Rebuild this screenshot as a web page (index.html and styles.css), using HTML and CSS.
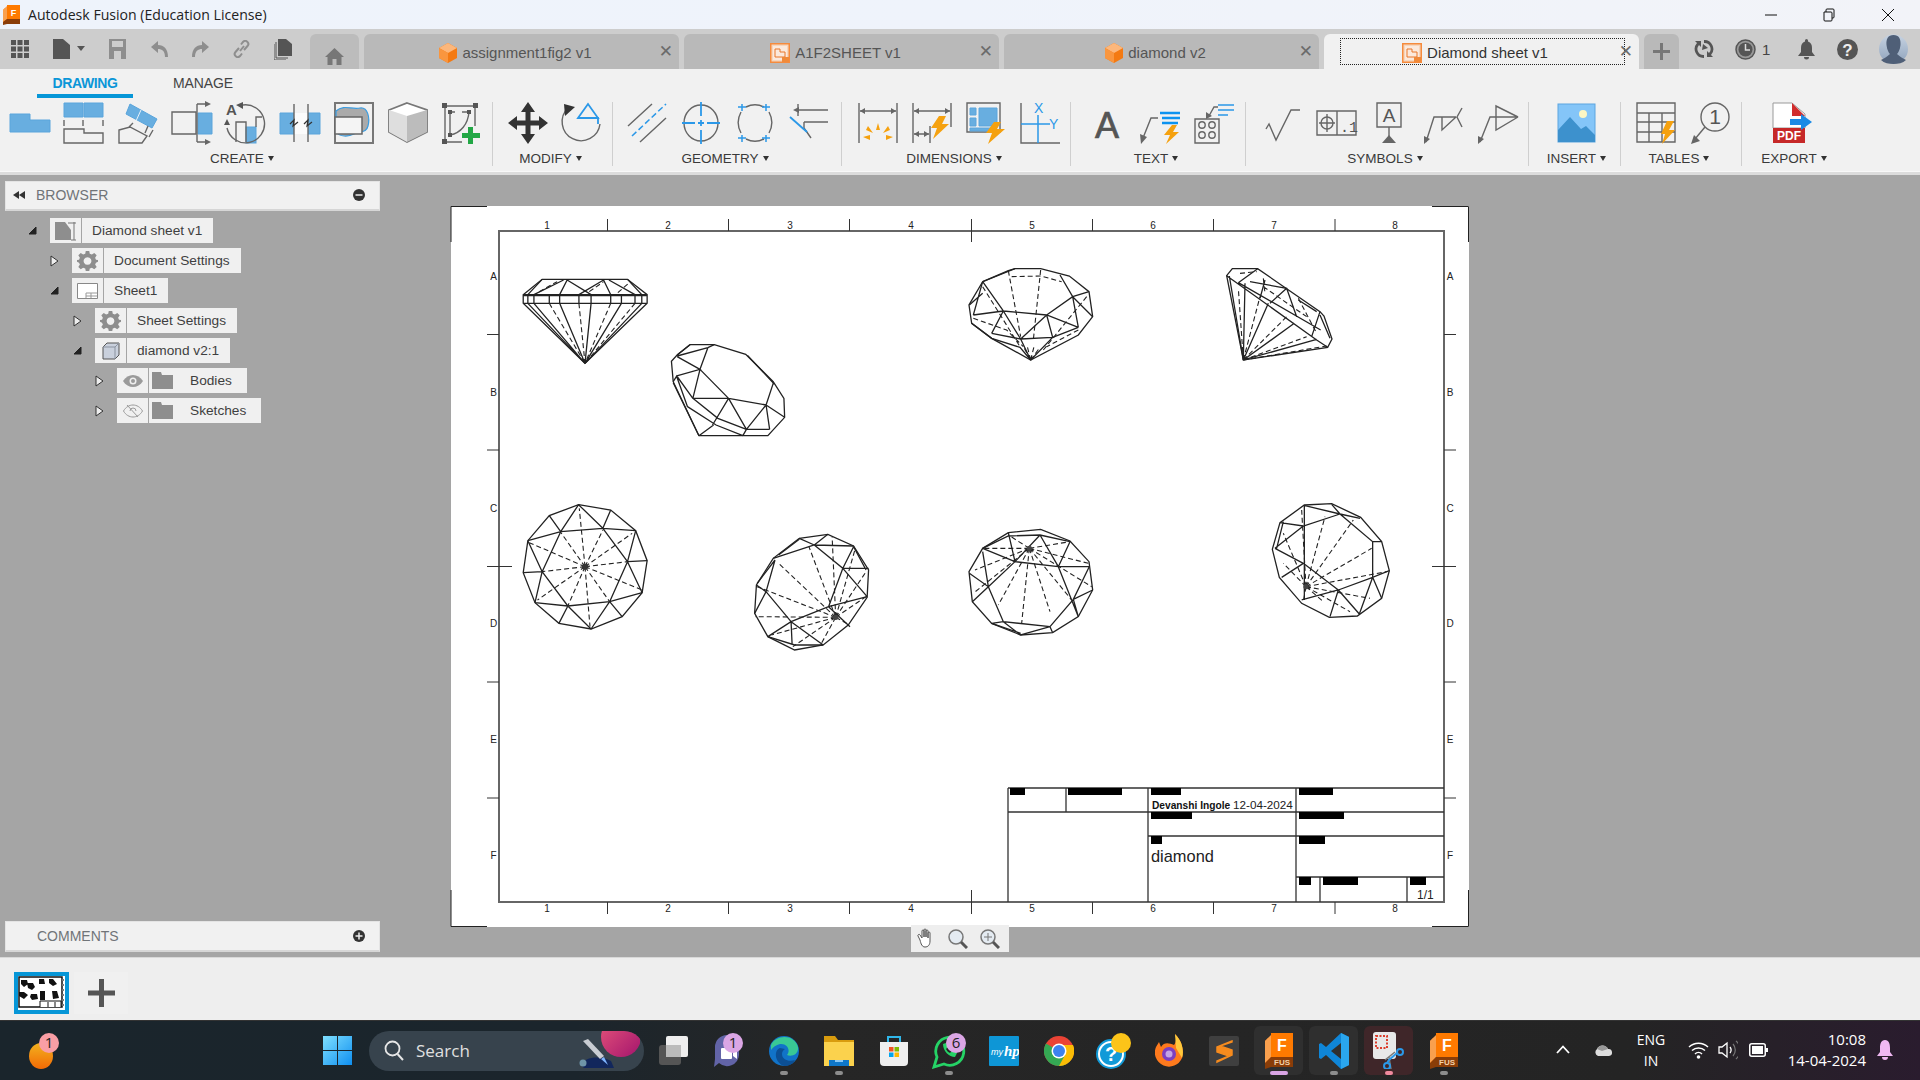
FILE: index.html
```html
<!DOCTYPE html>
<html lang="en">
<head>
<meta charset="utf-8">
<title>Autodesk Fusion</title>
<link rel="stylesheet" href="styles.css">
</head>
<body>
<svg class="defs" width="0" height="0">
  <symbol id="fus" viewBox="0 0 28 36">
    <path d="M3 5 L22 0 H28 V30 H6 L0 32 V8 Z" fill="#f47a12"/>
    <path d="M6 0 H28 V24 H6 Z" fill="#ff7a00"/>
    <path d="M0 8 L6 2 V24 L0 30 Z" fill="#f9a04e"/>
    <path d="M6 24 H28 V34 H6 L0 36 V30 Z" fill="#8a3d08"/>
  </symbol>
  <symbol id="sheetdoc" viewBox="0 0 20 20">
    <rect x=".75" y=".75" width="18.5" height="18.5" fill="#f6d6bd" stroke="#f58b3d" stroke-width="1.5"/>
    <rect x="3" y="3" width="14" height="14" fill="#fbe9dc"/>
    <path d="M5 6 H10 V9 H15 V14 H5 Z" fill="none" stroke="#e8772a"/>
    <rect x="12" y="14" width="7" height="5" fill="#f08a3a"/>
  </symbol>
  <symbol id="cube" viewBox="0 0 18 20">
    <path d="M9 0 L18 5 V15 L9 20 L0 15 V5 Z" fill="#f47a12"/>
    <path d="M9 0 L18 5 L9 10 L0 5 Z" fill="#fcb77c"/>
    <path d="M0 5 L9 10 V20 L0 15 Z" fill="#f9963f"/>
  </symbol>
  <symbol id="gear" viewBox="0 0 24 24">
    <path d="M10 1 H14 L14.6 4.2 L17 5.2 L19.7 3.3 L22.5 6 L20.7 8.8 L21.7 11 L24 11.5 V13.5 L21.7 14.5 L20.7 16.5 L22.5 19.3 L19.7 22 L17 20.2 L14.6 21 L14 24 H10 L9.4 21 L7 20.2 L4.3 22 L1.5 19.3 L3.3 16.5 L2.3 14.5 L0 13.5 V11.5 L2.3 11 L3.3 8.8 L1.5 6 L4.3 3.3 L7 5.2 L9.4 4.2 Z M12 8.2 A4.4 4.4 0 1 0 12.01 8.2 Z" fill="#8e8e8e" fill-rule="evenodd"/>
  </symbol>
  <symbol id="folder" viewBox="0 0 21 17">
    <path d="M0 0 H9 L10 3 H21 V17 H0 Z" fill="#8e8e8e"/>
  </symbol>
</svg>

<header class="titlebar">
  <svg class="app-logo" width="17" height="20" viewBox="0 0 17 20">
    <path d="M2 3 L14 0 H17 V17 H4 L0 18 V5 Z" fill="#f47a12"/>
    <path d="M4 0 H17 V14 H4 Z" fill="#ff7a00"/>
    <path d="M0 5 L4 1 V14 L0 17 Z" fill="#f9a04e"/>
    <path d="M4 14 H17 V19 H4 L0 20 V17 Z" fill="#8a3d08"/>
    <text x="10.500" y="10.500" class="logo-f">F</text>
  </svg>
  <span class="app-name">Autodesk Fusion (Education License)</span>
  <div class="winctl">
    <svg width="14" height="14" viewBox="0 0 14 14"><path d="M2 7 H14" class="wl"/></svg>
    <svg width="14" height="14" viewBox="0 0 14 14"><path d="M2 4 H9 A1 1 0 0 1 10 5 V12 A1 1 0 0 1 9 13 H3 A1 1 0 0 1 2 12 Z M4 4 V2 A1 1 0 0 1 5 1 H11 A1 1 0 0 1 12 2 V9 A1 1 0 0 1 11 10 H10" class="wl"/></svg>
    <svg width="14" height="14" viewBox="0 0 14 14"><path d="M1 1 L13 13 M13 1 L1 13" class="wl"/></svg>
  </div>
</header>

<nav class="toolbar">
  <div class="qat">
    <svg class="q-grid" width="18" height="18" viewBox="0 0 18 18"><path d="M0 0h5v5H0zM6.500 0h5v5h-5zM13 0h5v5h-5zM0 6.500h5v5H0zM6.500 6.500h5v5h-5zM13 6.500h5v5h-5zM0 13h5v5H0zM6.500 13h5v5h-5zM13 13h5v5h-5z" fill="#555"/></svg>
    <svg class="q-doc" width="32" height="20" viewBox="0 0 32 20"><path d="M0 0 H10 L17 6 V20 H0 Z" fill="#555"/><path d="M24 7 H32 L28 12 Z" fill="#555"/></svg>
    <svg class="q-save" width="17" height="20" viewBox="0 0 17 20"><path d="M0 0 H17 V20 H0 Z M3 2 V8 H14 V2 Z M5 12 V20 H12 V12 Z" fill="#8e8e8e" fill-rule="evenodd"/></svg>
    <svg class="q-undo" width="17" height="16" viewBox="0 0 17 16"><path d="M7 0 L0 6 L7 12 V8 C11 8 14 10 14 16 H17 C17 8 13 4 7 4 Z" fill="#8e8e8e"/></svg>
    <svg class="q-redo" width="17" height="16" viewBox="0 0 17 16"><path d="M10 0 L17 6 L10 12 V8 C6 8 3 10 3 16 H0 C0 8 4 4 10 4 Z" fill="#8e8e8e"/></svg>
    <svg class="q-link" width="17" height="18" viewBox="0 0 17 18"><path d="M7 11 L11 6 M6 8 L2.500 12 A3 3 0 0 0 7 16 L9 13.500 M11 10 L14.500 6 A3 3 0 0 0 10 2 L8 4.500" fill="none" stroke="#8e8e8e" stroke-width="2"/></svg>
    <svg class="q-copy" width="18" height="21" viewBox="0 0 18 21"><path d="M4 0 H12 L18 5 V17 H4 Z" fill="#555"/><path d="M2 3 V19 H14 M0 5 V21 H12" fill="none" stroke="#555"/></svg>
  </div>
  <div class="tab home"><svg width="19" height="17" viewBox="0 0 19 17"><path d="M9.500 0 L19 9 H16.500 V17 H11.500 V11 H7.500 V17 H2.500 V9 H0 Z" fill="#777"/></svg></div>
  <div class="tab"><span class="tab-in"><svg width="18" height="20"><use href="#cube"/></svg>assignment1fig2 v1</span><span class="x">✕</span></div>
  <div class="tab"><span class="tab-in"><svg width="20" height="20"><use href="#sheetdoc"/></svg>A1F2SHEET v1</span><span class="x">✕</span></div>
  <div class="tab"><span class="tab-in"><svg width="18" height="20"><use href="#cube"/></svg>diamond v2</span><span class="x">✕</span></div>
  <div class="tab active"><span class="focus"><span class="tab-in"><svg width="20" height="20"><use href="#sheetdoc"/></svg>Diamond sheet v1</span></span><span class="x">✕</span></div>
  <div class="tab plus"><svg width="17" height="17" viewBox="0 0 17 17"><path d="M7 0h3v7h7v3h-7v7H7v-7H0V7h7z" fill="#777"/></svg></div>
  <div class="tools">
    <svg class="t-upd" width="20" height="20" viewBox="0 0 20 20"><path d="M10 1 A9 9 0 0 1 17 16 L19 18 H13 V12 L15 14 A6 6 0 0 0 10 4 Z M10 19 A9 9 0 0 1 3 4 L1 2 H7 V8 L5 6 A6 6 0 0 0 10 16 Z" fill="#555"/><path d="M9 5 L14 9 L8 11 Z" fill="#555"/></svg>
    <svg class="t-clock" width="21" height="21" viewBox="0 0 21 21"><circle cx="10.500" cy="10.500" r="9.500" fill="#999" stroke="#555" stroke-width="1.500"/><circle cx="10.500" cy="10.500" r="7" fill="#555"/><path d="M10.500 5 V11 H15" stroke="#ddd" stroke-width="1.500" fill="none"/></svg>
    <span class="t-num">1</span>
    <svg class="t-bell" width="17" height="21" viewBox="0 0 17 21"><path d="M8.500 0 A2 2 0 0 1 10 2.500 C13 3.500 14 6 14 9 V13 L17 17 H0 L3 13 V9 C3 6 4 3.500 7 2.500 A2 2 0 0 1 8.500 0 Z M6 18 H11 A2.500 2.500 0 0 1 6 18 Z" fill="#555"/></svg>
    <svg class="t-help" width="21" height="21" viewBox="0 0 21 21"><circle cx="10.500" cy="10.500" r="10.500" fill="#555"/><text x="10.500" y="16.500" class="t-q">?</text></svg>
    <svg class="t-av" width="29" height="30" viewBox="0 0 29 30"><defs><linearGradient id="avg" x1="0" y1="0" x2="0" y2="1"><stop offset="0" stop-color="#c7d3e2"/><stop offset="1" stop-color="#8fa3bc"/></linearGradient></defs><circle cx="14.500" cy="15" r="14.500" fill="url(#avg)"/><path d="M14.500 1 C20 1 22 5 21.500 11 C21 16 19 19 18 20 C21 23 25 25 27 26 C24 29 19 30 14.500 30 C10 30 5 29 2 26 C4 25 8 23 11 20 C10 19 8 16 7.500 11 C7 5 9 1 14.500 1 Z" fill="#4f5f77"/></svg>
  </div>
</nav>

<section class="ribbon">
  <div class="rtabs">
    <span class="rtab on">DRAWING</span>
    <span class="rtab">MANAGE</span>
  </div>
  <div class="rgroups">
    <div class="rgroup g-create">
      <div class="ricons p10">
        <svg class="ic" viewBox="0 0 40 42"><path d="M0 12 H20 V18 H40 V30 H0 Z" class="bf"/></svg>
        <svg class="ic" viewBox="0 0 40 42"><path d="M0 1 H19 V15 H0 Z M20 1 H39 V15 H20 Z" class="bf"/><path d="M0 18 V24 M19 18 V24 M39 18 V24 M0 27 H20 V31 H39 V41 H0 Z" class="gr"/></svg>
        <svg class="ic" viewBox="0 0 40 42"><path d="M12 2 L39 17 L34 26 L8 12 Z" class="bf"/><path d="M23 8 L18 19" class="wh"/><path d="M1 28 L12 25 L29 34 L24 41 H1 Z M15 21 L11 25 M30 24 L27 31 M35 28 L31 35" class="gr"/></svg>
        <svg class="ic" viewBox="0 0 40 42"><path d="M0 10 H24 V32 H0 Z" class="gr"/><path d="M26 11 H40 V32 H26 Z" class="bf"/><path d="M25 2 V40 M25 2 H34 M25 40 H34" class="gr"/><path d="M33 -1 L39 2 L33 5 Z M33 37 L39 40 L33 43 Z" fill="#666"/></svg>
        <svg class="ic" viewBox="0 0 40 42"><text x="0" y="13" class="i-a">A</text><rect x="20" y="25" width="10" height="16" class="bf"/><path d="M17 3 A19 19 0 1 1 1 26" class="gr"/><path d="M17 0 V7 L10 3 Z M1 17 L-2 23 H4 Z" fill="#555"/><path d="M10 40 V20 H20 V40 M30 25 V15 H36" class="gr"/></svg>
        <svg class="ic" viewBox="0 0 40 42"><path d="M0 11 H14 V32 H0 Z M28 11 H40 V32 H28 Z" class="bf"/><rect x="14" y="11" width="14" height="21" fill="#fbfbfb"/><path d="M14 2 V40 M28 2 V40" class="gr"/><path d="M10 22 L14 18 L13 24 L18 20 M24 22 L28 18 L27 24 L32 20" fill="none" stroke="#333" stroke-width="1.200"/></svg>
        <svg class="ic" viewBox="0 0 40 42"><rect x="1" y="1" width="38" height="40" fill="none" stroke="#777" stroke-width="2"/><path d="M2 9 C10 2 18 8 26 6 C34 5 36 16 34 24 C32 32 26 28 20 32 C14 35 6 35 2 30 Z" fill="#aaa" stroke="#3a9ce0" stroke-width="1.200"/><rect x="1" y="15" width="27" height="17" fill="#f4f4f4" stroke="#666" stroke-width="1.500"/></svg>
        <svg class="ic" viewBox="0 0 40 42"><path d="M19 1 L39 8 V30 L19 40 L1 30 V8 Z" fill="#fff" stroke="#777" stroke-width="1.800"/><path d="M19 14 L39 8 V30 L19 40 Z" fill="#bcbcbc"/><path d="M19 14 L1 8 V30 L19 40 Z" fill="#dedede"/></svg>
        <svg class="ic" viewBox="0 0 40 42"><path d="M3 4 H33 V24 M3 4 V40 H20 M8 10 H13 M8 10 V33 M8 33 C19 31 26 22 27 10 H20" class="gr"/><path d="M0 1h5v5H0zM31 1h5v5h-5zM0 37h5v5H0zM6 8h4v4H6zM6 31h4v4H6zM25 8h4v4h-4z" fill="#555"/><path d="M26 25h5v6h7v5h-7v6h-5v-6h-6v-5h6z" fill="#22a745"/></svg>
      </div>
      <div class="rlabel">CREATE</div>
    </div>
    <div class="rgroup g-modify">
      <div class="ricons p15">
        <svg class="ic" viewBox="0 0 40 42"><path d="M20 0 L27 10 H22.500 V18.500 H31 V14 L40 21 L31 28 V23.500 H22.500 V32 H27 L20 42 L13 32 H17.500 V23.500 H9 V28 L0 21 L9 14 V18.500 H17.500 V10 H13 Z" fill="#333"/></svg>
        <svg class="ic" viewBox="0 0 40 42"><path d="M6 6 A19 19 0 1 0 38 22" class="gr"/><path d="M3 14 L2 2 L13 5 Z" fill="#333"/><path d="M16 16 L26 2 L36 16 Z" fill="none" stroke="#2b98e8" stroke-width="1.800"/><path d="M16 16 H36 V22" fill="none" stroke="#2b98e8" stroke-width="1.800"/></svg>
      </div>
      <div class="rlabel">MODIFY</div>
    </div>
    <div class="rgroup g-geo">
      <div class="ricons p15">
        <svg class="ic" viewBox="0 0 40 42"><path d="M0 24 L24 2 M12 40 L38 16" class="gr"/><path d="M4 34 L38 2" fill="none" stroke="#2b98e8" stroke-width="1.500" stroke-dasharray="6 3"/></svg>
        <svg class="ic" viewBox="0 0 40 42"><ellipse cx="19" cy="21" rx="17" ry="18" class="gr"/><path d="M19 0 V14 M19 18 V24 M19 28 V42 M0 21 H13 M16 21 H22 M25 21 H38" fill="none" stroke="#2b98e8" stroke-width="1.800"/></svg>
        <svg class="ic" viewBox="0 0 40 42"><path d="M10 5 A20 20 0 0 1 28 5 M33 10 A22 22 0 0 1 33 31 M28 37 A20 20 0 0 1 10 37 M5 31 A22 22 0 0 1 5 10" class="gr"/><path d="M2 5 H10 M6 2 V9 M26 5 H34 M30 2 V9 M2 36 H10 M6 33 V40 M26 36 H34 M30 33 V40" fill="none" stroke="#2b98e8" stroke-width="1.500"/></svg>
        <svg class="ic" viewBox="0 0 40 42"><path d="M8 2 V14 M8 8 H38 M14 20 H38 M14 20 L14 26 L21 36" class="gr"/><path d="M9 5 L3 8 L9 11 Z" fill="#666"/><path d="M0 15 L17 30" fill="none" stroke="#2b98e8" stroke-width="1.800"/></svg>
      </div>
      <div class="rlabel">GEOMETRY</div>
    </div>
    <div class="rgroup g-dim">
      <div class="ricons p16">
        <svg class="ic" viewBox="0 0 40 42"><path d="M1 1 V41 M39 1 V41 M2 9 H38" class="gr"/><path d="M7 6 L2 9 L7 12 Z M33 6 L38 9 L33 12 Z" fill="#666"/><path d="M20 21 L18 28 H22 Z M10 24 L8 28 L15 31 Z M30 24 L25 31 L32 28 Z M5 35 L12 33 V38 Z M35 35 L28 33 V38 Z" fill="#f5a10f"/></svg>
        <svg class="ic" viewBox="0 0 40 42"><path d="M1 1 V41 M39 1 V25 M2 9 H38 M2 32 H17 M18 24 V41" class="gr"/><path d="M7 6 L2 9 L7 12 Z M33 6 L38 9 L33 12 Z M7 29 L2 32 L7 35 Z M12 29 L17 32 L12 35 Z" fill="#666"/><path d="M27 14 L19 26 H25 L21 37 L37 22 H30 L34 14 Z" fill="#f5a10f"/></svg>
        <svg class="ic" viewBox="0 0 40 42"><path d="M1 1 H34 V30 H1 Z" class="gr"/><path d="M4 6 H10 V13 H4 Z M4 16 H10 V24 H4 Z M13 6 H31 V24 H13 Z M4 26 H25 V29 H4 Z" class="bf"/><path d="M28 20 L20 31 H26 L22 42 L39 27 H31 L35 20 Z" fill="#f5a10f"/></svg>
        <svg class="ic" viewBox="0 0 40 42"><path d="M1 1 V41 H40" class="gr"/><path d="M1 22 H30 M18 13 V41" fill="none" stroke="#2b98e8" stroke-width="1.500"/><text x="14" y="11" class="i-xy">X</text><text x="29" y="27" class="i-xy">Y</text></svg>
      </div>
      <div class="rlabel">DIMENSIONS</div>
    </div>
    <div class="rgroup g-text">
      <div class="ricons p15">
        <svg class="ic" viewBox="0 0 40 42"><text x="9" y="36" class="i-big">A</text></svg>
        <svg class="ic" viewBox="0 0 40 42"><path d="M18 16 H11 L3 36" class="gr"/><path d="M0 32 L7 35 L1 42 Z" fill="#666"/><path d="M20 11 H40 M22 16 H40 M22 21 H38" fill="none" stroke="#0c93f0" stroke-width="2.500"/><path d="M32 23 L24 33 H30 L26 42 L39 30 H33 L37 23 Z" fill="#f5a10f"/></svg>
        <svg class="ic" viewBox="0 0 40 42"><path d="M1 17 H25 V41 H1 Z" class="gr"/><circle cx="8" cy="23" r="3.200" class="gr"/><circle cx="18" cy="23" r="3.200" class="gr"/><circle cx="8" cy="33" r="3.200" class="gr"/><circle cx="18" cy="33" r="3.200" class="gr"/><path d="M24 5 H20 L15 14" class="gr"/><path d="M12 10 L18 14 L12 17 Z" fill="#666"/><path d="M24 3 H40 M24 8 H40 M24 13 H34" fill="none" stroke="#2b98e8" stroke-width="1.500"/></svg>
      </div>
      <div class="rlabel">TEXT</div>
    </div>
    <div class="rgroup g-sym">
      <div class="ricons p16">
        <svg class="ic" viewBox="0 0 40 42"><path d="M4 27 L7 22 L14 38 L29 8 H38" class="gr"/></svg>
        <svg class="ic" viewBox="0 0 40 42"><path d="M1 9 H40 V33 H1 Z M21 9 V33" class="gr"/><circle cx="11" cy="21" r="6" class="gr"/><path d="M3 21 H19 M11 12 V30" class="gr"/><text x="24" y="30" class="i-t">.1</text></svg>
        <svg class="ic i-narrow" viewBox="0 0 26 42"><path d="M1 1 H25 V25 H1 Z M13 25 V34" class="gr"/><path d="M6 41 L13 33 L20 41 Z" fill="#666"/><text x="13" y="20" class="i-a2">A</text></svg>
        <svg class="ic" viewBox="0 0 40 42"><path d="M2 40 L10 15 H32 M18 15 L18 28 L32 15 M38 6 L33 15 L38 25" class="gr"/><path d="M0 34 L6 37 L0 42 Z" fill="#666"/></svg>
        <svg class="ic" viewBox="0 0 40 42"><path d="M2 40 L12 15 H40 L18 4 V28 L40 15" class="gr"/><path d="M0 34 L6 37 L0 42 Z" fill="#666"/></svg>
      </div>
      <div class="rlabel">SYMBOLS</div>
    </div>
    <div class="rgroup g-ins">
      <div class="ricons p28">
        <svg class="ic" viewBox="0 0 40 42"><rect x="1" y="2" width="37" height="38" fill="#84c5f8" stroke="#5ca5e0"/><circle cx="26" cy="12" r="4" fill="#fdf7c4"/><path d="M1 28 L13 15 L24 27 L29 24 L38 33 V40 H1 Z" fill="#3d91cd"/></svg>
      </div>
      <div class="rlabel">INSERT</div>
    </div>
    <div class="rgroup g-tab">
      <div class="ricons p15">
        <svg class="ic" viewBox="0 0 40 42"><path d="M1 1 H39 V40 H1 Z M1 11 H39 M1 20 H39 M1 30 H39 M13 11 V40 M26 11 V40" class="gr"/><path d="M31 19 L25 32 H29 L26 42 L39 28 H33 L38 19 Z" fill="#f5a10f"/></svg>
        <svg class="ic" viewBox="0 0 40 42"><circle cx="25" cy="15" r="14" class="gr"/><text x="25" y="22" class="i-one">1</text><path d="M15 25 L5 37" class="gr"/><path d="M1 42 L4 33 L10 39 Z" fill="#666"/></svg>
      </div>
      <div class="rlabel">TABLES</div>
    </div>
    <div class="rgroup g-exp">
      <div class="ricons p30">
        <svg class="ic" viewBox="0 0 40 42"><path d="M1 1 H20 L33 12 V26 H1 Z" fill="#fff" stroke="#999"/><path d="M20 1 L33 14 H20 Z" fill="#d12d2d"/><path d="M1 26 H33 V41 H1 Z" fill="#c62828"/><text x="17" y="38" class="i-pdf">PDF</text><path d="M18 17 H29 V12 L40 20 L29 28 V23 H18 Z" fill="#1b8ae5"/></svg>
      </div>
      <div class="rlabel">EXPORT</div>
    </div>
  </div>
</section>

<main class="canvas">
  <aside class="side">
    <div class="panel">
      <svg class="pn-back" width="12" height="8" viewBox="0 0 12 8"><path d="M6 0 L0 4 L6 8 Z M12 0 L6 4 L12 8 Z" fill="#333"/></svg>
      <span class="pn-title">BROWSER</span>
      <svg class="pn-btn" width="12" height="12" viewBox="0 0 12 12"><circle cx="6" cy="6" r="6" fill="#333"/><path d="M2.500 6 H9.500" stroke="#eee" stroke-width="1.500"/></svg>
    </div>
    <ul class="tree">
      <li class="row lv0">
        <svg class="arrow" width="10" height="9" viewBox="0 0 10 9"><path d="M1 8 L8 1 V8 Z" fill="#222" stroke="#222"/></svg>
        <span class="cell"><svg width="22" height="20" viewBox="0 0 22 20"><path d="M0 1 H10 L16 9 V19 H0 Z" fill="#8e8e8e"/><path d="M13 2 H21 M19 1 V19 M16 19 H21" stroke="#777" fill="none"/></svg></span>
        <span class="lbl">Diamond sheet v1</span>
      </li>
      <li class="row lv1">
        <svg class="arrow" width="10" height="12" viewBox="0 0 10 12"><path d="M1 1 L8 6 L1 11 Z" fill="#eee" stroke="#333"/></svg>
        <span class="cell"><svg width="21" height="21"><use href="#gear"/></svg></span>
        <span class="lbl">Document Settings</span>
      </li>
      <li class="row lv1">
        <svg class="arrow" width="10" height="9" viewBox="0 0 10 9"><path d="M1 8 L8 1 V8 Z" fill="#222" stroke="#222"/></svg>
        <span class="cell"><svg width="21" height="16" viewBox="0 0 21 16"><path d="M.5 .5 H20.500 V15.500 H.5 Z" fill="#fff" stroke="#888"/><path d="M9 10 H20 M9 13 H20 M9 10 V15 M14 10 V15" stroke="#999" fill="none"/></svg></span>
        <span class="lbl">Sheet1</span>
      </li>
      <li class="row lv2">
        <svg class="arrow" width="10" height="12" viewBox="0 0 10 12"><path d="M1 1 L8 6 L1 11 Z" fill="#eee" stroke="#333"/></svg>
        <span class="cell"><svg width="21" height="21"><use href="#gear"/></svg></span>
        <span class="lbl">Sheet Settings</span>
      </li>
      <li class="row lv2">
        <svg class="arrow" width="10" height="9" viewBox="0 0 10 9"><path d="M1 8 L8 1 V8 Z" fill="#222" stroke="#222"/></svg>
        <span class="cell"><svg width="18" height="18" viewBox="0 0 18 18"><path d="M1 5 L5 1 H17 V13 L13 17 H1 Z" fill="#c9d0dc" stroke="#555"/><path d="M1 5 H13 V17 M13 5 L17 1" fill="none" stroke="#8b93a0"/></svg></span>
        <span class="lbl">diamond v2:1</span>
      </li>
      <li class="row lv3">
        <svg class="arrow" width="10" height="12" viewBox="0 0 10 12"><path d="M1 1 L8 6 L1 11 Z" fill="#eee" stroke="#333"/></svg>
        <span class="cell"><svg width="20" height="12" viewBox="0 0 20 12"><path d="M0 6 C5 -2 15 -2 20 6 C15 14 5 14 0 6 Z" fill="#9a9a9a"/><circle cx="10" cy="6" r="3.500" fill="#eee"/><circle cx="10" cy="6" r="2" fill="#9a9a9a"/></svg></span>
        <span class="cell fcell"><svg width="21" height="17"><use href="#folder"/></svg></span>
        <span class="lbl lbl-f">Bodies</span>
      </li>
      <li class="row lv3">
        <svg class="arrow" width="10" height="12" viewBox="0 0 10 12"><path d="M1 1 L8 6 L1 11 Z" fill="#eee" stroke="#333"/></svg>
        <span class="cell"><svg width="20" height="14" viewBox="0 0 20 14"><path d="M.5 7 C5 -1 15 -1 19.500 7 C15 15 5 15 .5 7 Z M4 1 L15 13 M7 7 A3 3 0 0 1 13 7" fill="none" stroke="#9a9a9a"/></svg></span>
        <span class="cell fcell"><svg width="21" height="17"><use href="#folder"/></svg></span>
        <span class="lbl lbl-f">Sketches</span>
      </li>
    </ul>
    <div class="panel comments">
      <span class="pn-title">COMMENTS</span>
      <svg class="pn-btn" width="12" height="12" viewBox="0 0 12 12"><circle cx="6" cy="6" r="6" fill="#333"/><path d="M2.500 6 H9.500 M6 2.500 V9.500" stroke="#eee" stroke-width="1.500"/></svg>
    </div>
  </aside>

  <svg class="sheet" width="1020" height="722" viewBox="450 206 1020 722">
    <rect x="451" y="206" width="1018" height="721" fill="#fff"/>
    <path class="mk" d="M451 242 V206.500 H487 M1432 206.500 H1468.500 V242 M451 890 V926.500 H487 M1432 926.500 H1468.500 V890"/>
    <rect x="499" y="231" width="945" height="671" class="frame"/>
    <path class="tk" d="M607.500 219 V231 M728.500 219 V231 M849.500 219 V231 M971.500 219 V242 M1092.500 219 V231 M1213.500 219 V231 M1335 219 V231 M607.500 902 V914 M728.500 902 V914 M849.500 902 V914 M971.500 890 V914 M1092.500 902 V914 M1213.500 902 V914 M1335 902 V914 M487 334.500 H499 M487 450 H499 M487 566.500 H512 M487 682 H499 M487 798 H499 M1444 334.500 H1456 M1444 450 H1456 M1432 566.500 H1456 M1444 682 H1456 M1444 798 H1456"/>
    <g class="rl">
      <text x="547" y="229">1</text><text x="668" y="229">2</text><text x="790" y="229">3</text><text x="911" y="229">4</text><text x="1032" y="229">5</text><text x="1153" y="229">6</text><text x="1274" y="229">7</text><text x="1395" y="229">8</text>
      <text x="547" y="912">1</text><text x="668" y="912">2</text><text x="790" y="912">3</text><text x="911" y="912">4</text><text x="1032" y="912">5</text><text x="1153" y="912">6</text><text x="1274" y="912">7</text><text x="1395" y="912">8</text>
      <text x="493.500" y="280">A</text><text x="493.500" y="396">B</text><text x="493.500" y="512">C</text><text x="493.500" y="627">D</text><text x="493.500" y="743">E</text><text x="493.500" y="859">F</text>
      <text x="1450" y="280">A</text><text x="1450" y="396">B</text><text x="1450" y="512">C</text><text x="1450" y="627">D</text><text x="1450" y="743">E</text><text x="1450" y="859">F</text>
    </g>
    <path class="tb" d="M1008 788 H1444 M1008 812 H1444 M1148 836 H1444 M1296 877 H1444 M1008 788 V902 M1066 788 V812 M1148 788 V902 M1296 788 V902 M1320 877 V902 M1407 877 V902"/>
    <path class="red" d="M1010 788h15v7h-15zM1068 788h54v7h-54zM1151 788h30v7h-30zM1299 788h34v7h-34zM1151 812h41v7h-41zM1299 812h45v7h-45zM1151 836h11v8h-11zM1299 836h26v8h-26zM1299 877h12v8h-12zM1323 877h35v8h-35zM1410 877h16v8h-16z"/>
    <text x="1152" y="809" class="tt-b">Devanshi Ingole</text>
    <text x="1233" y="809" class="tt">12-04-2024</text>
    <text x="1151" y="862" class="tt-l">diamond</text>
    <text x="1417" y="899" class="tt-s">1/1</text>

    <g transform="translate(450 200) scale(.35714 .33333)">
      <g class="so">
        <path d="M205 284 L258 238 H497 L552 284 V310 L378 490 L205 310 Z M205 284 H552 M205 287 H552 M205 310 H552"/>
        <path d="M218 284 V310 M235 284 V310 M278 284 V310 M307 284 V310 M361 284 V310 M395 284 V310 M450 284 V310 M480 284 V310 M518 284 V310 M537 284 V310"/>
        <path d="M218 284 L258 238 M235 284 L318 240 M307 284 L328 240 M395 284 L328 240 M361 284 L430 240 M450 284 L430 240 M518 284 L445 240 M537 284 L497 238"/>
        <path d="M218 310 L378 490 M235 310 L378 490 M307 310 L378 490 M395 310 L378 490 M480 310 L378 490 M537 310 L378 490"/>
      </g>
      <path class="da" d="M250 275 L300 245 M390 275 L430 245 M470 278 L500 250 M278 310 L378 490 M361 310 L378 490 M450 310 L378 490 M518 310 L378 490"/>

      <g class="so">
        <path d="M672 434 H740 L828 463 L905 545 L935 595 L937 652 L890 707 H697 L625 545 L620 484 L636 465 Z"/>
        <path d="M636 465 L672 434 M636 468 L722 443 L740 434 M722 443 L700 508 M636 470 L700 508 L635 528 M625 545 L635 528 L680 595 M700 508 L680 595 M700 508 L780 595 M680 595 L780 595 L885 615 M780 595 L735 675 M780 595 L830 688 M885 615 L830 688 M885 615 L905 550 M885 615 L895 688 M885 615 L937 652 M830 688 H895 M830 688 L820 707 M697 707 L738 675 M680 595 L750 655 L830 688 M665 620 L745 675 L820 707 M635 530 L665 620 M833 466 L908 552 M625 548 L697 707"/>
      </g>

      <g class="so">
        <path d="M360 914 L450 930 L520 992 L552 1082 L538 1178 L482 1250 L395 1287 L305 1270 L238 1208 L205 1118 L218 1022 L278 947 Z"/>
        <path d="M218 1022 L310 995 L428 985 L520 992 M238 1208 L330 1218 L447 1205 L538 1178 M360 914 L310 995 M360 914 L428 985 M278 947 L310 995 M450 930 L428 985 M428 985 L497 1085 M520 992 L497 1085 M497 1085 L552 1082 M497 1085 L538 1178 M497 1085 L447 1205 M447 1205 L482 1250 M447 1205 L395 1287 M330 1218 L395 1287 M330 1218 L305 1270 M258 1115 L330 1218 M258 1115 L238 1208 M258 1115 L205 1118 M258 1115 L218 1022 M258 1115 L310 995"/>
      </g>
      <path class="da" d="M378 1100 L362 925 M378 1100 L510 1000 M378 1100 L538 1170 M378 1100 L392 1280 M378 1100 L245 1200 M378 1100 L222 1028 M378 1100 L428 990 M378 1100 L497 1085 M378 1100 L447 1205 M378 1100 L330 1218 M378 1100 L258 1115 M378 1100 L310 997"/>
      <circle cx="378" cy="1100" r="9" fill="#333"/>

      <g class="so">
        <path d="M978 1015 L1058 1003 L1130 1038 L1172 1110 L1168 1192 L1115 1275 L1045 1335 L965 1350 L890 1310 L853 1240 L858 1155 L905 1075 Z"/>
        <path d="M905 1075 L1020 1035 L1130 1038 M978 1015 L1020 1035 M1058 1003 L1020 1035 M1020 1035 L1100 1105 H1172 M1100 1105 L1130 1040 M1100 1105 L1168 1190 M1100 1105 L1060 1220 M1168 1190 L1060 1220 L955 1265 L890 1310 M955 1265 L958 1335 M955 1265 L1045 1335 M1060 1220 L1120 1280 M955 1265 L885 1175 L858 1155 M885 1175 L853 1240 M885 1175 L910 1080 M860 1150 L910 1080 M890 1310 L965 1335 L1045 1335 M920 1065 L978 1018 M1130 1040 L1165 1110"/>
      </g>
      <path class="da" d="M1080 1252 L1070 1010 M1080 1252 L1135 1045 M1080 1252 L1165 1115 M1080 1252 L1005 1040 M1080 1252 L920 1090 M1080 1252 L860 1160 M1080 1252 L855 1250 M1080 1252 L900 1305 M1080 1252 L960 1340 M1080 1252 L1040 1330 M1080 1252 L1110 1270 M1080 1252 L1165 1190"/>
      <circle cx="1080" cy="1252" r="8" fill="#444"/>
    </g>

    <g transform="translate(940 240) scale(.33333)">
      <g class="so">
        <path d="M225 86 H302 L388 108 L447 155 L458 230 L415 285 L272 360 L155 295 L95 250 L87 195 L128 125 Z"/>
        <path d="M128 125 L205 92 L225 86 M128 125 L190 213 M190 213 L320 225 L415 262 M190 213 L242 297 M190 213 L155 280 M242 297 L320 225 L398 170 L447 155 M398 170 L415 262 M398 170 L360 105 M242 297 L338 292 M320 225 L338 292 L415 262 M242 297 L272 360 M338 292 L272 360 M100 225 L190 213 M95 250 L155 295 L240 322 L272 360 M155 280 L242 297 M458 230 L398 170 M128 125 L100 225 M128 160 L88 195"/>
      </g>
      <path class="da" d="M205 92 L242 290 M302 90 L280 300 M215 110 L302 108 L365 125 M128 140 L240 320 M100 235 L200 270 L250 320 M415 270 L320 320 M440 170 L310 330 M272 360 L250 320 M272 360 L262 320 M272 360 L282 320 M272 360 L300 322"/>

      <g class="so">
        <path d="M877 86 H953 L1140 215 L1152 228 L1176 297 L1163 322 L910 360 L860 107 Z"/>
        <path d="M860 107 L1130 300 L1163 322 M895 128 L1142 270 M910 360 L915 130 M910 360 L985 190 M910 360 L1063 250 M910 360 L1130 298 M910 360 L868 108 M895 128 L953 86 M930 125 L1040 145 L1070 230 M1040 145 L990 190 M960 175 L975 120 M1140 215 L1115 290 M1140 225 L1170 295 M1075 180 L1130 215"/>
      </g>
      <path class="da" d="M910 360 L895 145 M910 360 L960 170 M910 360 L1040 230 M910 360 L1100 290 M910 360 L1160 318 M900 100 L950 95 M970 115 L975 160 M970 140 L1100 230 M1075 175 L1130 280"/>

      <g class="so">
        <path d="M205 878 L302 868 L390 903 L447 965 L458 1050 L415 1130 L338 1178 L242 1185 L155 1150 L97 1085 L87 995 L128 925 Z"/>
        <path d="M128 925 L205 888 L300 885 L390 905 M205 878 L225 965 M300 885 L225 965 L145 1040 L97 1085 M300 885 L355 980 M355 980 L390 905 M355 980 H447 M355 980 L415 1130 M225 965 L355 980 M128 925 L225 965 M128 935 L145 1040 L88 1000 M145 1040 L190 1145 L330 1160 M190 1145 L155 1150 M190 1145 L242 1185 M330 1160 L400 1078 L447 982 M400 1078 L458 1050 M400 1078 L415 1130 M330 1160 L242 1185 M330 1160 L338 1178 M155 1150 L242 1180"/>
      </g>
      <path class="da" d="M268 925 L130 925 M268 925 L205 885 M268 925 L390 905 M268 925 L445 970 M268 925 L105 990 M268 925 L100 1060 M268 925 L175 1095 M268 925 L245 1150 M268 925 L330 1115 M268 925 L395 1080 M268 925 L455 1040"/>
      <circle cx="268" cy="925" r="8" fill="#444"/>

      <g class="so">
        <path d="M1093 795 L1175 791 L1262 832 L1325 905 L1348 992 L1325 1075 L1252 1128 L1168 1132 L1085 1090 L1018 1012 L997 928 L1020 848 Z"/>
        <path d="M1093 795 V1080 M1020 848 L1090 858 L1200 822 M1095 797 L1200 822 L1260 835 M1175 793 L1200 822 L1298 905 H1325 M1298 905 V1012 L1348 992 M1298 1012 L1325 1075 M1298 1012 L1195 1050 M1298 1012 L1258 1122 M1195 1050 L1090 970 M1195 1050 L1258 1122 M1195 1050 L1170 1130 M1090 970 L1005 925 M1090 970 L1025 1012 M1090 858 L1005 925 M1085 1080 L1195 1050 M1030 845 L1010 925"/>
      </g>
      <path class="da" d="M1098 1040 L1085 810 M1098 1040 L1155 830 M1098 1040 L1240 840 M1098 1040 L1295 925 M1098 1040 L1030 880 M1098 1040 L1340 995 M1098 1040 L1290 1075 M1098 1040 L1230 1115 M1098 1040 L1150 1085 M1098 1040 L1090 1085 M1098 1040 L1030 970"/>
      <circle cx="1098" cy="1040" r="8" fill="#444"/>
    </g>
  </svg>

  <div class="viewctl">
    <svg width="21" height="21" viewBox="0 0 21 21"><path d="M5 12 L3 8 A1 1 0 0 1 5 7 L7 10 V3 A1 1 0 0 1 9 3 V9 V2 A1 1 0 0 1 11 2 V9 V3 A1 1 0 0 1 13 3 V10 V5 A1 1 0 0 1 15 5 V13 C15 17 13 19 10 19 C7 19 6 16 5 12 Z" fill="#fff" stroke="#555"/></svg>
    <svg width="21" height="21" viewBox="0 0 21 21"><circle cx="9" cy="9" r="7" fill="#e4ebf2" stroke="#777" stroke-width="1.500"/><path d="M14 14 L20 20" stroke="#555" stroke-width="3"/></svg>
    <svg width="21" height="21" viewBox="0 0 21 21"><circle cx="9" cy="9" r="7" fill="#e4ebf2" stroke="#777" stroke-width="1.500"/><path d="M5 9 H13 M9 5 V13" stroke="#777"/><path d="M14 14 L20 20" stroke="#555" stroke-width="3"/></svg>
  </div>
</main>

<section class="sheetbar">
  <div class="thumb">
    <svg width="47" height="34" viewBox="0 0 47 34">
      <rect width="47" height="34" fill="#fff"/>
      <path d="M1 1 H44 V31 H1 Z" fill="none" stroke="#111" stroke-width="1.500"/>
      <path d="M3 4h6l1 4-4 3-3-3z M9 7h6l2 4-3 3-4-2z M21 3h5l1 5h-6z M31 3h4l4 5-4 2-4-3z M1 16h5l4 3-4 4-5-3z M13 18h6l1 5-6 1-2-3z M22 15h5v9h-5z M34 15h5l2 7-6 1z" fill="#111"/>
      <path d="M22 31 V25 H43 V31 M30 26 V31 M37 26 V31" fill="#fff" stroke="#111"/>
      <path d="M45 3 V30" stroke="#777" stroke-width="2" stroke-dasharray="2 3"/>
    </svg>
  </div>
  <div class="addsheet"><svg width="27" height="28" viewBox="0 0 27 28"><path d="M11 0h5v11.500h11v5H16V28h-5V16.500H0v-5h11z" fill="#555"/></svg></div>
</section>

<footer class="taskbar">
  <div class="widget">
    <svg width="30" height="36" viewBox="0 0 30 36"><defs><linearGradient id="wg" x1="0" y1="0" x2="0" y2="1"><stop offset="0" stop-color="#f2b21f"/><stop offset="1" stop-color="#f26a05"/></linearGradient></defs><ellipse cx="12" cy="23" rx="12" ry="13" fill="url(#wg)"/><circle cx="20" cy="10" r="10" fill="#f99ea5"/><text x="20" y="15" class="b-n">1</text></svg>
  </div>
  <svg class="start" width="29" height="29" viewBox="0 0 29 29"><defs><linearGradient id="st" x1="0" y1="0" x2="1" y2="1"><stop offset="0" stop-color="#7fe0ff"/><stop offset="1" stop-color="#0f8ff0"/></linearGradient></defs><path d="M0 0h14v14H0zM15 0h14v14H15zM0 15h14v14H0zM15 15h14v14H15z" fill="url(#st)"/></svg>
  <div class="search">
    <svg width="20" height="21" viewBox="0 0 20 21"><circle cx="8.500" cy="8.500" r="7" fill="none" stroke="#e6e6e6" stroke-width="1.800"/><path d="M13.500 14 L19 20" stroke="#e6e6e6" stroke-width="2"/></svg>
    <span>Search</span>
    <svg class="s-art" width="62" height="40" viewBox="0 0 62 40"><defs><linearGradient id="pl" x1="0" y1="0" x2="1" y2="1"><stop offset="0" stop-color="#e8567a"/><stop offset="1" stop-color="#a3146d"/></linearGradient></defs><path d="M3 34 C6 26 22 24 33 30 L36 37 H6 Z" fill="#12275c"/><circle cx="43" cy="6" r="20" fill="url(#pl)"/><path d="M5 10 L10 8 L26 25 L22 28 Z" fill="#c9cdd3"/><path d="M23 28 L30 34 L26 26 Z" fill="#7fb5ff"/><circle cx="5" cy="32" r="3.500" fill="#6f95a8"/></svg>
  </div>
  <div class="apps">
    <div class="app"><svg width="29" height="29" viewBox="0 0 29 29"><rect x="0" y="9" width="22" height="20" rx="3" fill="#555"/><rect x="7" y="0" width="22" height="21" rx="2" fill="#eee"/><rect x="7" y="9" width="15" height="12" fill="#bbb"/></svg></div>
    <div class="app"><svg width="32" height="36" viewBox="0 0 32 36"><path d="M2 14 A12 12 0 0 1 26 14 V22 A12 12 0 0 1 6 30 L1 34 L2 26 Z" fill="#6264a7"/><rect x="8" y="15" width="11" height="11" rx="1" fill="#fff"/><path d="M20 18 L24 15 V26 L20 23 Z" fill="#fff"/><circle cx="20" cy="10" r="10" fill="#dba6e5"/><text x="20" y="15" class="b-n">1</text></svg></div>
    <div class="app"><svg width="30" height="30" viewBox="0 0 30 30"><circle cx="15" cy="15" r="15" fill="#1173c8"/><path d="M2 9 C6 -1 25 -3 29 11 C30 19 22 21 18 19 C22 14 18 7 11 8 C7 9 4 11 2 14 Z" fill="#39c995"/><path d="M11 12 C5 14 5 26 15 30 C20 30 24 28 26 24 C20 26 13 24 13 18 C13 16 14 14 16 13 Z" fill="#0c4f94"/></svg><i class="pip"></i></div>
    <div class="app"><svg width="30" height="30" viewBox="0 0 30 30"><path d="M0 0 H11 L14 4 H30 V30 H0 Z" fill="#d99c0e"/><rect x="0" y="6" width="30" height="24" fill="#fbd24d"/><path d="M5 24 H25 V30 H5 Z" fill="#0f77c9"/><rect x="11" y="24" width="8" height="2" fill="#89c8f7"/></svg><i class="pip"></i></div>
    <div class="app"><svg width="28" height="30" viewBox="0 0 28 30"><path d="M8 6 V1 H20 V6" fill="none" stroke="#30b7ea" stroke-width="2"/><path d="M0 6 H28 V26 A4 4 0 0 1 24 30 H4 A4 4 0 0 1 0 26 Z" fill="#efefef"/><path d="M9 11h4.500v4.500H9z" fill="#f05322"/><path d="M14.500 11H19v4.500h-4.500z" fill="#80bb02"/><path d="M9 16.500h4.500V21H9z" fill="#02a5ef"/><path d="M14.500 16.500H19V21h-4.500z" fill="#ffb902"/></svg></div>
    <div class="app"><svg width="34" height="36" viewBox="0 0 34 36"><path d="M2 34 L5 24 A14 14 0 1 1 12 31 Z" fill="none" stroke="#25d366" stroke-width="2.800"/><path d="M11 11 C11 18 17 24 23 24 L25 20 L20 18 L18 20 C16 19 15 18 14 16 L16 14 L14 10 Z" fill="#25d366"/><circle cx="24" cy="10" r="10" fill="#dba6e5"/><text x="24" y="15" class="b-n">6</text></svg><i class="pip"></i></div>
    <div class="app"><svg width="30" height="30" viewBox="0 0 30 30"><rect width="30" height="30" rx="1" fill="#0e96d6"/><text x="2" y="19" class="hp1">my</text><text x="15" y="20" class="hp2">hp</text></svg></div>
    <div class="app"><svg width="30" height="30" viewBox="0 0 30 30"><circle cx="15" cy="15" r="15" fill="#ea4335"/><path d="M15 15 L28 22 A15 15 0 0 1 15 30 A15 15 0 0 1 2 7.500 Z" fill="#34a853"/><path d="M15 9 H29 A15 15 0 0 1 15 30 L21 19 Z" fill="#fbbc05"/><circle cx="15" cy="15" r="7.500" fill="#fff"/><circle cx="15" cy="15" r="6" fill="#3d82f0"/></svg></div>
    <div class="app"><svg width="36" height="36" viewBox="0 0 36 36"><circle cx="15" cy="21" r="14" fill="#fff" stroke="#119ad8" stroke-width="2"/><circle cx="15" cy="21" r="11" fill="#119ad8"/><text x="15" y="28" class="q">?</text><circle cx="25" cy="10" r="10" fill="#fcc419"/></svg></div>
    <div class="app"><svg width="28" height="34" viewBox="0 0 28 34"><path d="M20 0 C28 8 29 18 27 24 A14 14 0 1 1 1 13 L4 8 L6 13 C9 8 14 9 19 11 C21 8 22 5 20 0 Z" fill="#fe7a1d"/><path d="M20 0 C28 8 29 18 27 24 L21 14 Z" fill="#ffc93c"/><circle cx="14" cy="20" r="7" fill="#7b3fc1"/><circle cx="14" cy="20" r="3.500" fill="#c3a4e4"/></svg></div>
    <div class="app"><svg width="30" height="30" viewBox="0 0 30 30"><rect width="30" height="30" rx="2" fill="#3f3f3f"/><path d="M23 5 L8 11 V16 L20 20 L8 25 V26 L23 19 V14 L11 10 L23 6 Z" fill="#f68b1e" stroke="#f68b1e" stroke-width="1.500"/></svg></div>
    <div class="app on"><svg width="28" height="36" viewBox="0 0 28 36"><use href="#fus" width="28" height="36"/><text x="17" y="18" class="fus-f">F</text><text x="17" y="32" class="fus-s">FUS</text></svg><i class="pip wide"></i></div>
    <div class="app on"><svg width="30" height="36" viewBox="0 0 30 36"><path d="M22 0 L30 4 V32 L22 36 L7 22 L2 26 L0 25 V11 L2 10 L7 14 Z M22 10 L12 18 L22 26 Z" fill="#0f86d8" fill-rule="evenodd"/><path d="M22 0 L30 4 V32 L22 36 Z" fill="#2aa6ee"/></svg><i class="pip"></i></div>
    <div class="app on snip"><svg width="31" height="37" viewBox="0 0 31 37"><rect x="0" y="0" width="23" height="27" rx="3" fill="#e8e8e8"/><rect x="3" y="4" width="11" height="12" fill="none" stroke="#dc3d2c" stroke-width="2" stroke-dasharray="2 1.500"/><path d="M22 20 L12 28 M18 37 L16 25" stroke="#777" stroke-width="1.500"/><circle cx="27" cy="20" r="3" fill="none" stroke="#2b98e8" stroke-width="2"/><circle cx="14" cy="34" r="3" fill="none" stroke="#2b98e8" stroke-width="2"/><path d="M24 21 L16 28 L14 31" stroke="#2b98e8" stroke-width="2" fill="none"/></svg><i class="pip pink"></i></div>
    <div class="app"><svg width="28" height="36" viewBox="0 0 28 36"><use href="#fus" width="28" height="36"/><text x="17" y="18" class="fus-f">F</text><text x="17" y="32" class="fus-s">FUS</text></svg><i class="pip"></i></div>
  </div>
  <div class="tray">
    <svg class="tr-up" width="14" height="9" viewBox="0 0 14 9"><path d="M1 8 L7 1.500 L13 8" fill="none" stroke="#fff" stroke-width="1.800"/></svg>
    <svg class="tr-cloud" width="20" height="14" viewBox="0 0 20 14"><path d="M5 13 A4 4 0 0 1 4 6 A6 6 0 0 1 15 6 A3.500 3.500 0 0 1 16 13 Z" fill="#ddd"/><path d="M4 6 A6 6 0 0 1 15 6 L9 8 Z" fill="#999"/></svg>
    <div class="tr-lang"><span>ENG</span><span>IN</span></div>
    <svg class="tr-wifi" width="21" height="18" viewBox="0 0 21 18"><path d="M1 6 A14 14 0 0 1 20 6 M4 9.500 A9.500 9.500 0 0 1 17 9.500 M7 13 A5 5 0 0 1 14 13" fill="none" stroke="#fff" stroke-width="1.500"/><circle cx="10.500" cy="16" r="1.800" fill="#fff"/></svg>
    <svg class="tr-vol" width="20" height="20" viewBox="0 0 20 20"><path d="M1 7 H4 L9 3 V17 L4 13 H1 Z" fill="none" stroke="#fff" stroke-width="1.300"/><path d="M12 7 A5 5 0 0 1 12 13" fill="none" stroke="#fff" stroke-width="1.300"/><path d="M15 4 A9 9 0 0 1 15 16 M18 1 A12 12 0 0 1 18 19" fill="none" stroke="#777" stroke-width="1.200"/></svg>
    <svg class="tr-bat" width="19" height="14" viewBox="0 0 19 14"><rect x=".75" y=".75" width="15.500" height="12.500" rx="2" fill="none" stroke="#fff" stroke-width="1.500"/><rect x="3" y="3" width="11" height="8" fill="#fff"/><rect x="17" y="5" width="2" height="4" fill="#fff"/></svg>
    <div class="tr-time"><span>10:08</span><span>14-04-2024</span></div>
    <svg class="tr-bell" width="16" height="20" viewBox="0 0 16 20"><path d="M8 0 C12 0 13 4 13 8 V12 L16 16 H0 L3 12 V8 C3 4 4 0 8 0 Z M5 17 H11 A3 3 0 0 1 5 17 Z" fill="#f0b8f2"/></svg>
  </div>
</footer>
</body>
</html>
```
FILE: styles.css
```css
* { box-sizing: border-box; }
html, body { margin: 0; padding: 0; }
body {
  width: 1920px;
  height: 1080px;
  overflow: hidden;
  display: flex;
  flex-direction: column;
  font-family: "Liberation Sans", Arial, sans-serif;
  color: #333;
  background: #a5a5a5;
}
.defs { position: absolute; }
svg { display: block; flex: none; }
.fus-f { font: 700 16px "Liberation Sans", sans-serif; fill: #fff; text-anchor: middle; }
.fus-s { font: 700 8px "Liberation Sans", sans-serif; fill: #f3d0a8; text-anchor: middle; }
.logo-f { font: 700 9px "Liberation Sans", sans-serif; fill: #fff; text-anchor: middle; }

/* title bar */
.titlebar {
  height: 29px;
  background: linear-gradient(90deg, #eef3fb 0%, #eff3fb 50%, #f2f3f8 100%);
  display: flex;
  align-items: center;
  padding-left: 3px;
}
.app-name { margin-left: 8px; font: 14.1px "Open Sans", sans-serif; color: #222; }
.winctl { margin-left: auto; display: flex; gap: 45px; padding-right: 25px; }
.wl { fill: none; stroke: #111; stroke-width: 1; }

/* toolbar + document tabs */
.toolbar {
  height: 40px;
  background: #cdcdcd;
  display: flex;
  align-items: flex-end;
  gap: 5px;
  position: relative;
}
.qat { width: 310px; height: 40px; display: flex; align-items: center; flex: none; margin-right: -5px; }
.q-grid { margin-left: 11px; }
.q-doc { margin-left: 24px; }
.q-save { margin-left: 24px; }
.q-undo { margin-left: 25px; }
.q-redo { margin-left: 24px; }
.q-link { margin-left: 24px; }
.q-copy { margin-left: 24px; }
.tab {
  width: 315px;
  height: 35px;
  flex: none;
  background: #b9b9b9;
  border-radius: 6px 6px 0 0;
  display: flex;
  align-items: center;
  justify-content: center;
  position: relative;
  font-size: 15px;
  color: #555;
  padding: 2px 12px 0 0;
}
.tab.home { width: 49px; padding: 10px 0 0; background: #bcbcbc; }
.tab.plus { width: 35px; padding: 0; }
.tab.active { background: #f1f1f1; color: #333; }
.tab-in { display: inline-flex; align-items: center; gap: 5px; }
.x {
  position: absolute;
  right: 6px;
  top: 7px;
  font: 17px "DejaVu Sans", sans-serif;
  color: #6b6b6b;
}
.focus {
  width: 285px;
  height: 27px;
  margin: -3px -7px 0 7px;
  border: 1px dotted #222;
  display: flex;
  align-items: center;
  justify-content: center;
  padding: 3px 15px 0 0;
}
.tools { flex: 1; height: 40px; display: flex; align-items: center; }
.t-upd { margin-left: 10px; }
.t-clock { margin-left: 21px; }
.t-num { margin-left: 6px; font-size: 15px; color: #444; width: 9px; }
.t-bell { margin-left: 27px; }
.t-help { margin-left: 22px; }
.t-av { margin-left: 21px; }
.t-q { font: 700 17px "Liberation Sans", sans-serif; fill: #eee; text-anchor: middle; }

/* ribbon */
.ribbon {
  height: 106px;
  background: #f1f1f1;
  border-bottom: 3px solid #dcdcdc;
  box-shadow: inset 0 -1px 0 #f8f8f8;
  flex: none;
}
.rtabs { display: flex; height: 29px; padding-left: 37px; gap: 22px; }
.rtab {
  width: 96px;
  text-align: center;
  font-size: 14px;
  line-height: 28px;
  color: #444;
  letter-spacing: -.1px;
}
.rtab.on { color: #0a96d8; font-weight: 700; border-bottom: 4px solid #0696d7; letter-spacing: -.4px; }
.rgroups { display: flex; margin-top: 4px; }
.rgroup { height: 64px; flex: none; border-right: 1px solid #cfcfcf; }
.g-create { width: 493px; }
.g-modify { width: 120px; }
.g-geo { width: 229px; }
.g-dim { width: 229px; }
.g-text { width: 175px; }
.g-sym { width: 283px; }
.g-ins { width: 92px; }
.g-tab { width: 121px; }
.g-exp { width: 100px; border-right: 0; }
.ricons { display: flex; gap: 14px; height: 42px; }
.p10 { padding-left: 10px; }
.p15 { padding-left: 15px; }
.p16 { padding-left: 16px; }
.p28 { padding-left: 28px; }
.p30 { padding-left: 30px; }
.ic { width: 40px; height: 42px; overflow: visible; }
.i-narrow { width: 26px; margin: 0 8px 0 6px; }
.rlabel {
  margin-top: 7px;
  height: 16px;
  line-height: 16px;
  font-size: 13.5px;
  color: #3a3a3a;
  text-align: center;
  padding-right: 4px;
}
.g-create .rlabel { padding-right: 8px; }
.g-ins .rlabel { padding: 0 0 0 4px; }
.g-exp .rlabel { padding: 0 0 0 4px; }
.rlabel::after {
  content: "";
  display: inline-block;
  margin-left: 4px;
  vertical-align: 2px;
  border: 3.5px solid transparent;
  border-top: 5px solid #333;
  border-bottom: 0;
}
.bf { fill: #68aee0; stroke: #5aa5dc; stroke-width: 1; }
.gr { fill: none; stroke: #666; stroke-width: 1.4; }
.wh { stroke: #e8f2fa; stroke-width: 1; fill: none; }
.i-a { font: 700 15px "Liberation Sans", sans-serif; fill: #555; }
.i-xy { font: 14px "Liberation Sans", sans-serif; fill: #2b98e8; }
.i-big { font: 36px "Liberation Sans", sans-serif; fill: #555; stroke: #555; stroke-width: .7; }
.i-t { font: 15px "Liberation Mono", monospace; fill: #555; }
.i-a2 { font: 19px "Liberation Sans", sans-serif; fill: #555; text-anchor: middle; }
.i-one { font: 21px "Liberation Sans", sans-serif; fill: #555; text-anchor: middle; }
.i-pdf { font: 700 12px "Liberation Sans", sans-serif; fill: #fff; text-anchor: middle; }

/* canvas */
.canvas {
  flex: 1;
  display: flex;
  align-items: flex-start;
  background: #a5a5a5;
  position: relative;
  min-height: 0;
}
.side {
  width: 375px;
  height: 771px;
  margin: 6px 0 0 5px;
  display: flex;
  flex-direction: column;
  flex: none;
}
.panel {
  height: 30px;
  flex: none;
  background: #f1f1f1;
  border: 1px solid #e4e4e4;
  border-bottom: 2px solid #d6d6d6;
  display: flex;
  align-items: center;
  font-size: 14px;
  color: #777;
  padding: 0 14px 1px 7px;
}
.pn-back { margin-right: 11px; }
.pn-title { color: #707478; }
.pn-btn { margin-left: auto; }
.comments { margin-top: auto; padding-left: 31px; height: 31px; }
.tree { list-style: none; margin: 7px 0 0; padding: 0 0 0 23px; display: flex; flex-direction: column; gap: 5px; }
.row { height: 25px; display: flex; align-items: center; font-size: 13.7px; color: #3f3f3f; }
.lv1 { margin-left: 22px; }
.lv2 { margin-left: 45px; }
.lv3 { margin-left: 67px; }
.arrow { width: 10px; margin-right: 12px; }
.cell {
  width: 31px;
  height: 25px;
  margin-right: 1px;
  background: #f0f0f0;
  display: flex;
  align-items: center;
  justify-content: center;
}
.lbl { height: 25px; line-height: 25px; background: #f0f0f0; padding: 0 11px 0 10px; }
.fcell { margin-right: 0; justify-content: flex-start; padding-left: 3px; }
.lbl-f { padding: 0 15px 0 10px; }

/* sheet */
.sheet { margin: 31px 0 0 70px; }
.mk { fill: none; stroke: #222; stroke-width: 1; }
.frame { fill: none; stroke: #666; stroke-width: 2; }
.tk { fill: none; stroke: #333; stroke-width: 1; }
.rl text { font: 10px "Liberation Sans", sans-serif; fill: #222; text-anchor: middle; }
.tb { fill: none; stroke: #333; stroke-width: 1.3; }
.red { fill: #000; }
.tt-b { font: 700 10.2px "Liberation Sans", sans-serif; fill: #111; }
.tt { font: 11.7px "Liberation Sans", sans-serif; fill: #222; }
.tt-l { font: 16.4px "Liberation Sans", sans-serif; fill: #222; }
.tt-s { font: 12px "Liberation Sans", sans-serif; fill: #222; }
.so path { fill: none; stroke: #222; stroke-width: 1.3; vector-effect: non-scaling-stroke; }
.da { fill: none; stroke: #222; stroke-width: 1.1; stroke-dasharray: 5 3; vector-effect: non-scaling-stroke; }
.viewctl {
  position: absolute;
  left: 911px;
  top: 750px;
  width: 98px;
  height: 27px;
  background: #eeeeee;
  display: flex;
  align-items: center;
  justify-content: center;
  gap: 11px;
  padding-right: 6px;
}

/* sheet strip */
.sheetbar {
  height: 63px;
  flex: none;
  background: #eeeeee;
  border-top: 1px solid #d8d8d8;
  display: flex;
  align-items: flex-start;
  padding: 14px 0 0 14px;
}
.thumb { width: 55px; height: 42px; border: 4px solid #0696d7; background: #fff; }
.addsheet {
  width: 54px;
  height: 42px;
  margin-left: 5px;
  background: #f0f0f0;
  display: flex;
  align-items: center;
  justify-content: center;
}

/* taskbar */
.taskbar {
  height: 60px;
  flex: none;
  display: flex;
  align-items: center;
  padding-left: 29px;
  background: linear-gradient(90deg, #1a252c 0%, #1b252c 30%, #262626 42%, #242424 85%, #2a1c2e 100%);
  border-top: 1px solid #333;
  color: #fff;
  font-family: "Open Sans", sans-serif;
}
.widget { width: 30px; }
.b-n { font: 15px "Open Sans", sans-serif; fill: #222; text-anchor: middle; }
.start { margin-left: 264px; }
.search {
  width: 275px;
  height: 40px;
  margin-left: 17px;
  border-radius: 20px;
  background: #37434d;
  display: flex;
  align-items: center;
  padding-left: 15px;
  font-size: 17px;
  color: #e0e0e0;
  position: relative;
  overflow: hidden;
}
.search span { margin-left: 12px; }
.s-art { margin-left: auto; margin-right: 4px; }
.apps { display: flex; gap: 6px; margin-left: 5px; }
.app {
  width: 49px;
  height: 49px;
  border-radius: 6px;
  display: flex;
  align-items: center;
  justify-content: center;
  position: relative;
}
.app.on { background: #2f2f2f; }
.app.snip { background: #3f2629; }
.pip {
  position: absolute;
  bottom: 0;
  left: 50%;
  margin-left: -4px;
  width: 8px;
  height: 4px;
  border-radius: 2px;
  background: #8d8d8d;
}
.pip.wide { width: 18px; margin-left: -9px; background: #d9a4e4; }
.pip.pink { background: #f08a9e; }
.hp1 { font: italic 9px "Liberation Sans", sans-serif; fill: #fff; }
.hp2 { font: italic 700 15px "Liberation Serif", serif; fill: #fff; }
.q { font: 700 20px "Liberation Sans", sans-serif; fill: #fff; text-anchor: middle; }
.tray { display: flex; align-items: center; margin-left: 88px; margin-top: -2px; }
.tr-cloud { margin-left: 23px; }
.tr-lang {
  margin-left: 23px;
  width: 30px;
  display: flex;
  flex-direction: column;
  align-items: center;
  font-size: 14px;
  line-height: 21px;
}
.tr-wifi { margin-left: 22px; }
.tr-vol { margin-left: 9px; }
.tr-bat { margin-left: 11px; }
.tr-time {
  margin-left: 10px;
  width: 88px;
  display: flex;
  flex-direction: column;
  align-items: flex-end;
  font-size: 15px;
  line-height: 21px;
  white-space: nowrap;
}
.tr-bell { margin-left: 11px; }
```
